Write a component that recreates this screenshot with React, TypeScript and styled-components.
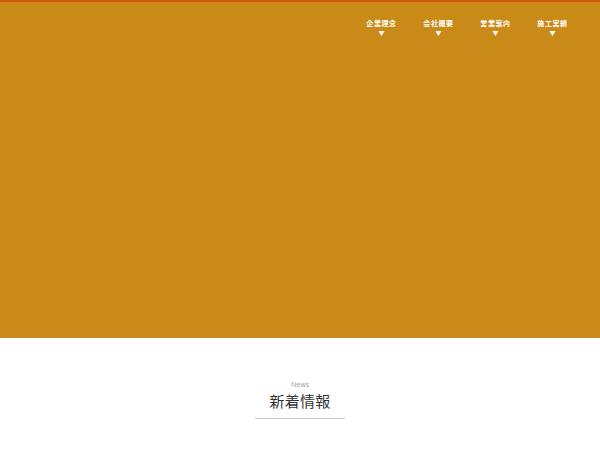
import React from "react";
import styled, { createGlobalStyle } from "styled-components";

const Global = createGlobalStyle`
  html, body { margin: 0; padding: 0; background: #fff; }
  body { font-family: "Noto Sans CJK JP", "Noto Sans", sans-serif; }
`;

const Hero = styled.header`
  height: 336px;
  background: #c98a18;
  border-top: 2px solid #d05a12;
  display: flex;
  justify-content: flex-end;
  align-items: flex-start;
`;

const Nav = styled.nav`
  display: flex;
  padding: 16px 19px 0 0;
`;

const NavItem = styled.a`
  width: 57px;
  display: flex;
  flex-direction: column;
  align-items: center;
  color: #fff;
  font-size: 7px;
  font-weight: 700;
  letter-spacing: 0.6px;
  line-height: 10px;
  text-decoration: none;
`;

const Arrow = styled.span`
  font-size: 6px;
  line-height: 10px;
  letter-spacing: 0;
`;

const Section = styled.section`
  display: flex;
  flex-direction: column;
  align-items: center;
  padding-top: 42px;
`;

const Sub = styled.div`
  font-family: "Open Sans", "Noto Sans", sans-serif;
  font-size: 7px;
  color: #999;
  line-height: 10px;
`;

const Title = styled.h2`
  margin: 0;
  font-size: 15px;
  font-weight: 400;
  color: #333;
  line-height: 22px;
  letter-spacing: 0.3px;
  width: 90px;
  text-align: center;
  padding-bottom: 6px;
  border-bottom: 1px solid #ccc;
`;

const items = ["企業理念", "会社概要", "営業案内", "施工実績"];

export default function App() {
  return (
    <>
      <Global />
      <Hero>
        <Nav>
          {items.map((t) => (
            <NavItem key={t} href="#">
              {t}
              <Arrow>▼</Arrow>
            </NavItem>
          ))}
        </Nav>
      </Hero>
      <Section>
        <Sub>News</Sub>
        <Title>新着情報</Title>
      </Section>
    </>
  );
}
